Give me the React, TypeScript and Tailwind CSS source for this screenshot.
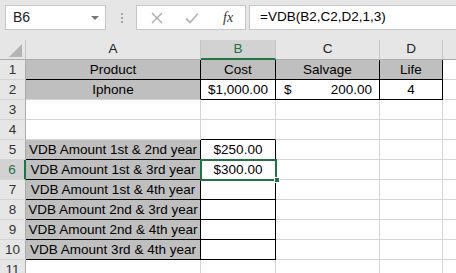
import React from "react";

type Edge = "grid" | "black";

type CellDef = {
  text?: string;
  align?: "center" | "acct";
  gray?: boolean;
  r?: Edge;
  b?: Edge;
};

const widths = ["w-[175px]", "w-[75px]", "w-[104px]", "w-[63px]"];

const blank: CellDef = {};

// rows 1..11, columns A..D
const rows: CellDef[][] = [
  [
    { text: "Product", gray: true, r: "black", b: "black" },
    { text: "Cost", gray: true, r: "black", b: "black" },
    { text: "Salvage", gray: true, r: "black", b: "black" },
    { text: "Life", gray: true, r: "black", b: "black" },
  ],
  [
    { text: "Iphone", gray: true, r: "black" },
    { text: "$1,000.00", r: "black", b: "black" },
    { text: "200.00", align: "acct", r: "black", b: "black" },
    { text: "4", r: "black", b: "black" },
  ],
  [blank, blank, blank, blank],
  [blank, { b: "black" }, blank, blank],
  [
    { text: "VDB Amount 1st & 2nd year", gray: true, r: "black", b: "black" },
    { text: "$250.00", r: "black", b: "black" },
    blank,
    blank,
  ],
  [
    { text: "VDB Amount 1st & 3rd year", gray: true, r: "black", b: "black" },
    { text: "$300.00", r: "black", b: "black" },
    blank,
    blank,
  ],
  [
    { text: "VDB Amount 1st & 4th year", gray: true, r: "black", b: "black" },
    { r: "black", b: "black" },
    blank,
    blank,
  ],
  [
    { text: "VDB Amount 2nd & 3rd year", gray: true, r: "black", b: "black" },
    { r: "black", b: "black" },
    blank,
    blank,
  ],
  [
    { text: "VDB Amount 2nd & 4th year", gray: true, r: "black", b: "black" },
    { r: "black", b: "black" },
    blank,
    blank,
  ],
  [
    { text: "VDB Amount 3rd & 4th year", gray: true, r: "black", b: "black" },
    { r: "black", b: "black" },
    blank,
    blank,
  ],
  [blank, blank, blank, blank],
];

function Cell({ cell, width }: { cell: CellDef; width: string }) {
  const rb = cell.r === "black" ? "border-r-black" : "border-r-[#d4d4d4]";
  const bb = cell.b === "black" ? "border-b-black" : "border-b-[#d4d4d4]";
  const bg = cell.gray ? "bg-[#bfbfbf]" : "bg-white";
  return (
    <div
      className={`${width} ${rb} ${bb} ${bg} flex h-full shrink-0 items-center justify-center whitespace-nowrap border-r border-b pt-[1px] text-black`}
    >
      {cell.align === "acct" ? (
        <div className="flex w-full justify-between pl-[8px] pr-[7px]">
          <span>$</span>
          <span>{cell.text}</span>
        </div>
      ) : (
        cell.text
      )}
    </div>
  );
}

function FormulaBar() {
  return (
    <div className="flex h-[40px] items-start bg-[#e6e6e6] pt-[5px]">
      <div className="ml-[5px] flex h-[25px] w-[101px] items-center justify-between border border-[#c6c6c6] bg-white pl-[7px] pr-[6px] text-[14px] text-[#222]">
        <span>B6</span>
        <span className="h-0 w-0 border-x-[4px] border-t-[4px] border-x-transparent border-t-[#777]" />
      </div>
      <div className="ml-[15px] mt-[8px] flex flex-col gap-[2px]">
        <span className="h-[2px] w-[2px] bg-[#a6a6a6]" />
        <span className="h-[2px] w-[2px] bg-[#a6a6a6]" />
        <span className="h-[2px] w-[2px] bg-[#a6a6a6]" />
      </div>
      <div className="ml-[13px] flex h-[25px] w-[110px] items-center border border-[#c6c6c6] bg-white">
        <svg width="12" height="12" viewBox="0 0 12 12" className="ml-[14px]">
          <path d="M1 1 L11 11 M11 1 L1 11" stroke="#a8a8a8" strokeWidth="1.3" fill="none" />
        </svg>
        <svg width="14" height="12" viewBox="0 0 14 12" className="ml-[22px]">
          <path d="M1 6.5 L5 10.5 L13 1.5" stroke="#b4b4b4" strokeWidth="1.8" fill="none" />
        </svg>
        <span className="ml-[24px] font-['Liberation_Serif',serif] text-[14px] italic text-[#333]">
          fx
        </span>
      </div>
      <div className="ml-[3px] flex h-[25px] flex-1 items-center border border-r-0 border-[#c6c6c6] bg-white pl-[10px] text-[13.5px] text-black">
        =VDB(B2,C2,D2,1,3)
      </div>
    </div>
  );
}

function ColumnHeaders() {
  const letters = ["A", "B", "C", "D"];
  return (
    <div className="flex h-[20px] bg-[#e6e6e6]">
      <div className="flex h-full w-[26px] shrink-0 items-end justify-end border-r border-b border-r-[#c6c6c6] border-b-[#ababab] pb-[2px] pr-[3px]">
        <svg width="13" height="13" viewBox="0 0 13 13">
          <polygon points="13,0 13,13 0,13" fill="#b4b4b4" />
        </svg>
      </div>
      {letters.map((l, i) => {
        const sel = l === "B";
        return (
          <div
            key={l}
            className={`${widths[i]} flex h-full shrink-0 items-center justify-center border-r border-r-[#c6c6c6] ${
              sel
                ? "border-b-2 border-b-[#217346] bg-[#d2d2d2] text-[#217346]"
                : "border-b border-b-[#ababab] text-[#222]"
            }`}
          >
            {l}
          </div>
        );
      })}
      <div className="h-full flex-1 border-b border-b-[#ababab]" />
    </div>
  );
}

export default function App() {
  return (
    <div className="h-[273px] w-[456px] overflow-hidden bg-white font-['Liberation_Sans',Arial,sans-serif] text-[13.5px]">
      <FormulaBar />
      <ColumnHeaders />
      <div className="relative">
        {rows.map((row, ri) => {
          const sel = ri === 5;
          return (
            <div key={ri} className="flex h-[20px]">
              <div
                className={`flex h-full w-[26px] shrink-0 items-center justify-center border-b border-b-[#d4d4d4] pt-[1px] ${
                  sel
                    ? "border-r-2 border-r-[#217346] bg-[#d2d2d2] text-[#217346]"
                    : "border-r border-r-[#ababab] bg-[#e6e6e6] text-[#333]"
                }`}
              >
                {ri + 1}
              </div>
              {row.map((c, ci) => (
                <Cell key={ci} cell={c} width={widths[ci]} />
              ))}
              <div className="h-full flex-1 border-b border-b-[#d4d4d4]" />
            </div>
          );
        })}
        {/* active cell B6 */}
        <div className="absolute left-[200px] top-[99px] h-[22px] w-[77px] border-2 border-[#217346]" />
        <div className="absolute left-[274px] top-[117px] h-[6px] w-[6px] border border-white bg-[#217346]" />
      </div>
    </div>
  );
}
